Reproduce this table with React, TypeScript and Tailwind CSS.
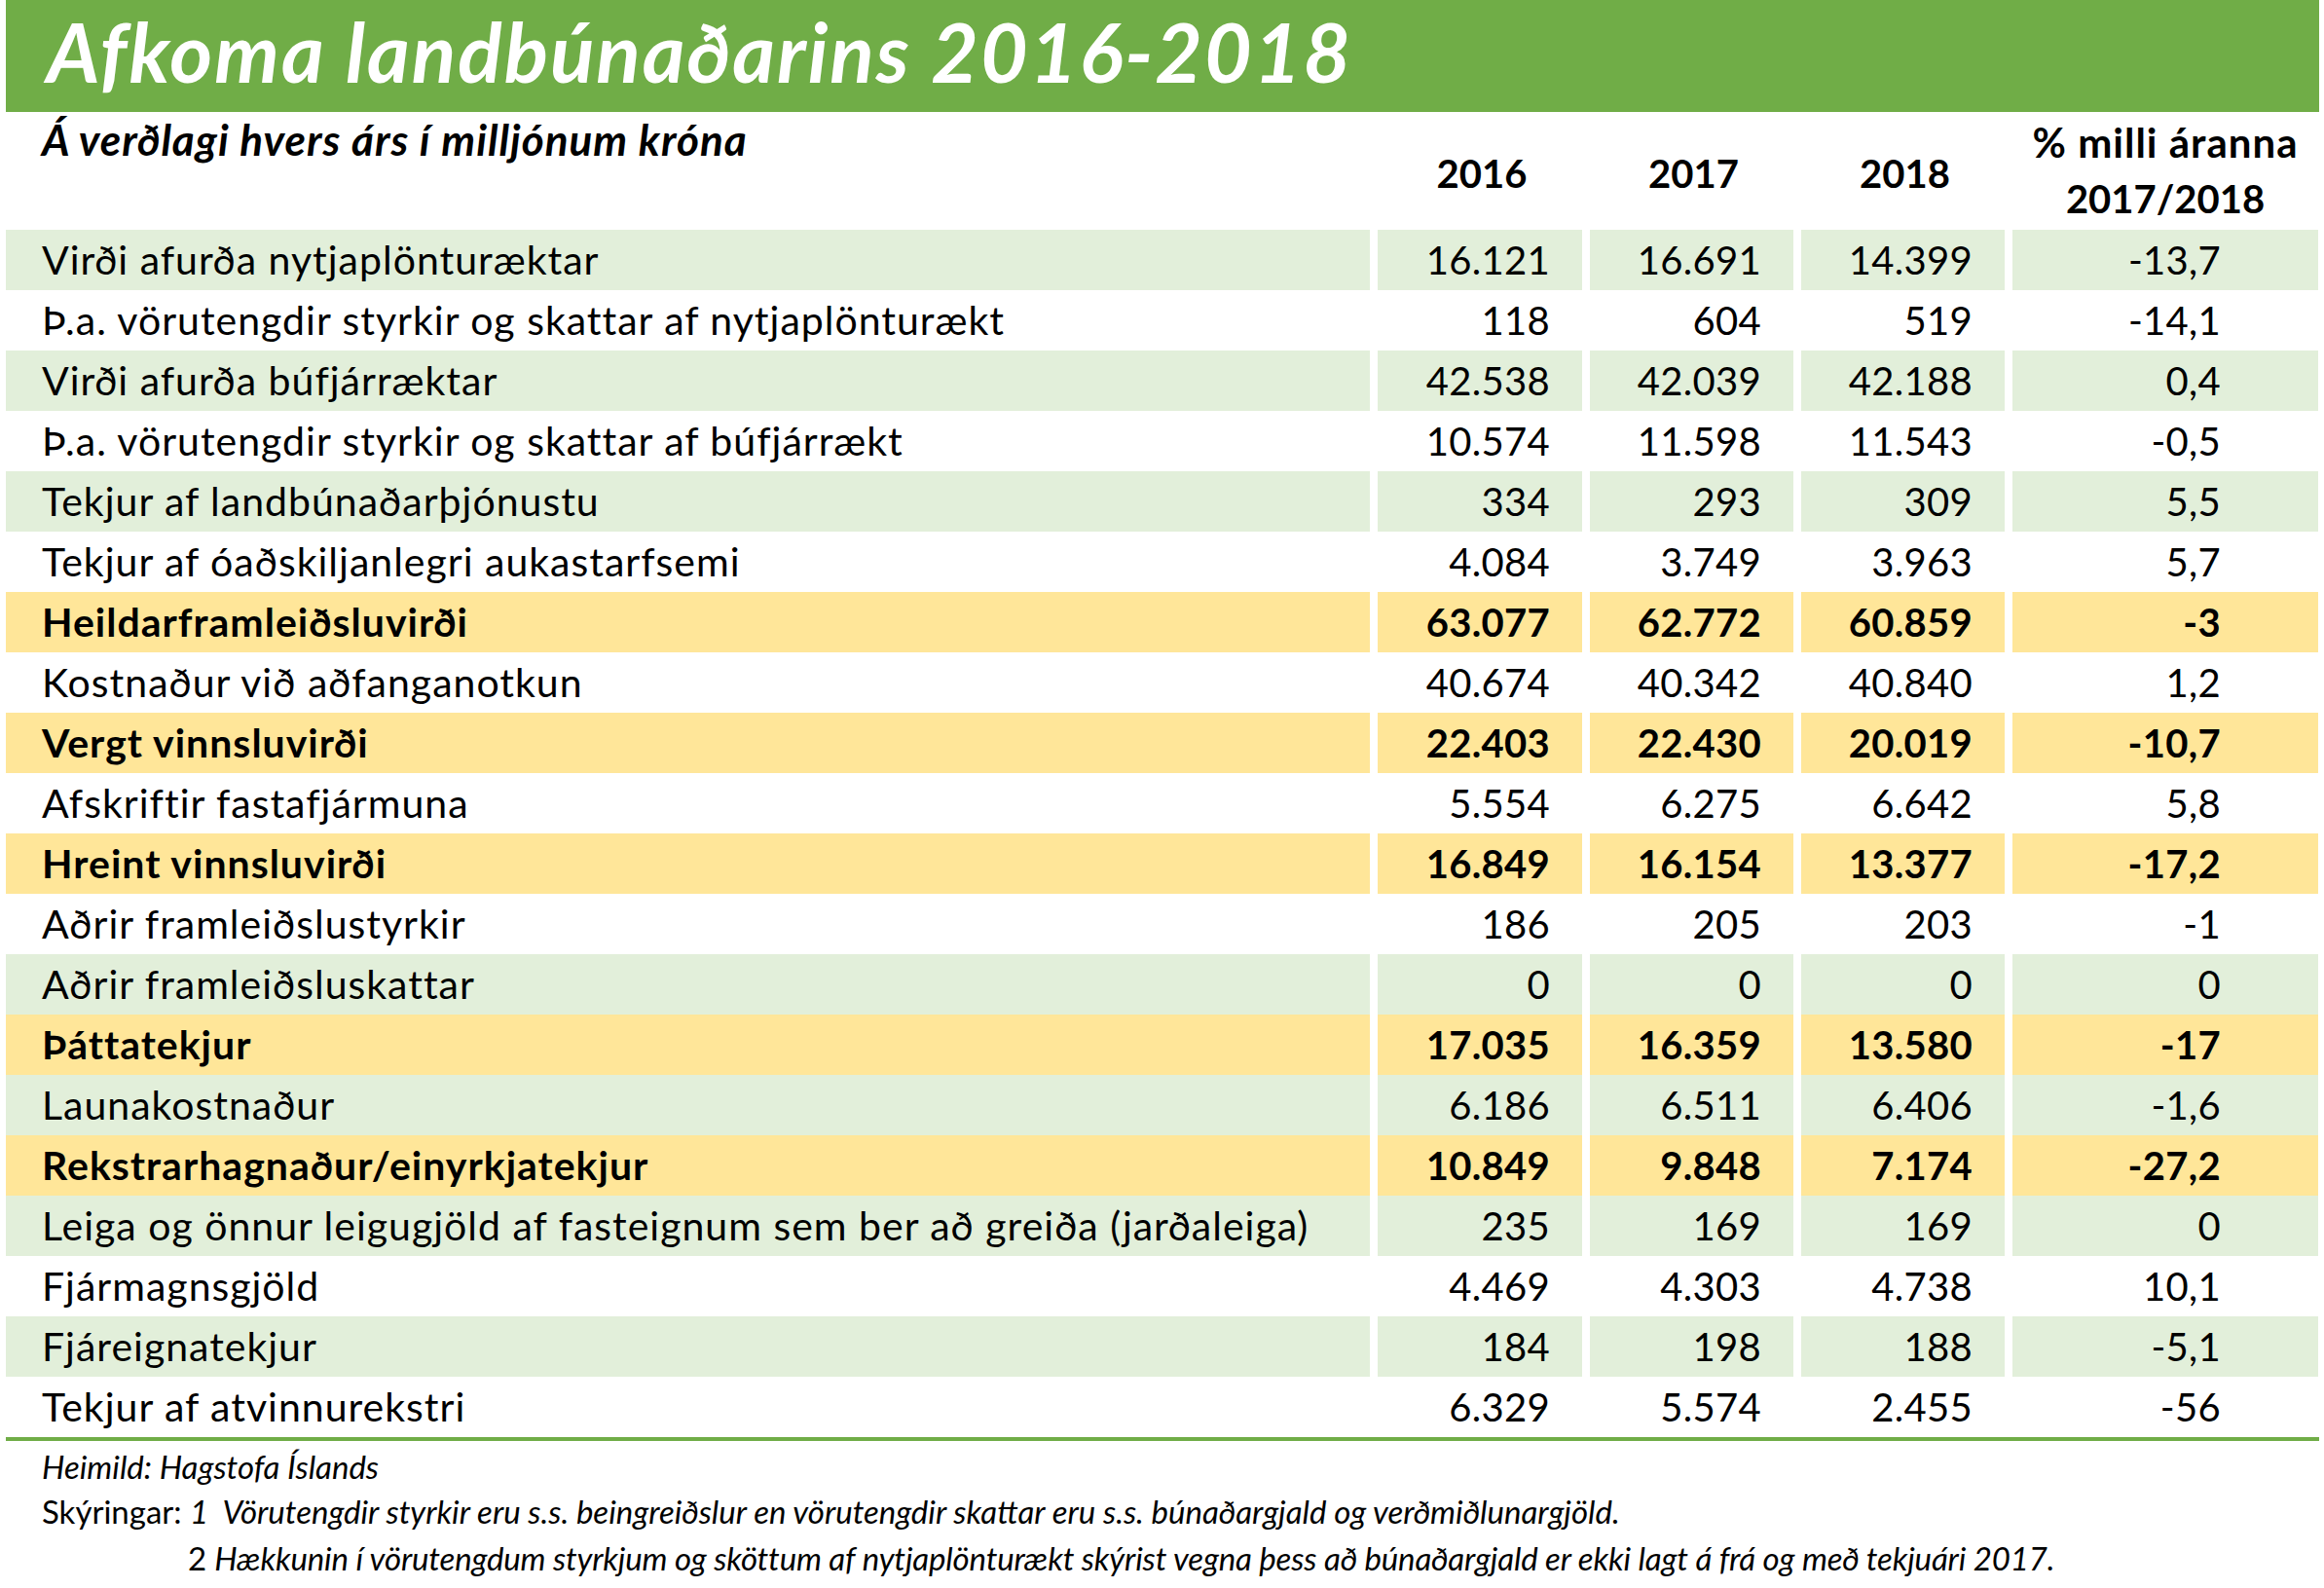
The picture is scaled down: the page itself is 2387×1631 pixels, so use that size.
import React from "react";

type Row = {
  label: string;
  v: [string, string, string, string];
  bg: "g" | "w" | "y";
};

const rows: Row[] = [
  { label: "Virði afurða nytjaplönturæktar", v: ["16.121", "16.691", "14.399", "-13,7"], bg: "g" },
  { label: "Þ.a. vörutengdir styrkir og skattar af nytjaplönturækt", v: ["118", "604", "519", "-14,1"], bg: "w" },
  { label: "Virði afurða búfjárræktar", v: ["42.538", "42.039", "42.188", "0,4"], bg: "g" },
  { label: "Þ.a. vörutengdir styrkir og skattar af búfjárrækt", v: ["10.574", "11.598", "11.543", "-0,5"], bg: "w" },
  { label: "Tekjur af landbúnaðarþjónustu", v: ["334", "293", "309", "5,5"], bg: "g" },
  { label: "Tekjur af óaðskiljanlegri aukastarfsemi", v: ["4.084", "3.749", "3.963", "5,7"], bg: "w" },
  { label: "Heildarframleiðsluvirði", v: ["63.077", "62.772", "60.859", "-3"], bg: "y" },
  { label: "Kostnaður við aðfanganotkun", v: ["40.674", "40.342", "40.840", "1,2"], bg: "w" },
  { label: "Vergt vinnsluvirði", v: ["22.403", "22.430", "20.019", "-10,7"], bg: "y" },
  { label: "Afskriftir fastafjármuna", v: ["5.554", "6.275", "6.642", "5,8"], bg: "w" },
  { label: "Hreint vinnsluvirði", v: ["16.849", "16.154", "13.377", "-17,2"], bg: "y" },
  { label: "Aðrir framleiðslustyrkir", v: ["186", "205", "203", "-1"], bg: "w" },
  { label: "Aðrir framleiðsluskattar", v: ["0", "0", "0", "0"], bg: "g" },
  { label: "Þáttatekjur", v: ["17.035", "16.359", "13.580", "-17"], bg: "y" },
  { label: "Launakostnaður", v: ["6.186", "6.511", "6.406", "-1,6"], bg: "g" },
  { label: "Rekstrarhagnaður/einyrkjatekjur", v: ["10.849", "9.848", "7.174", "-27,2"], bg: "y" },
  { label: "Leiga og önnur leigugjöld af fasteignum sem ber að greiða (jarðaleiga)", v: ["235", "169", "169", "0"], bg: "g" },
  { label: "Fjármagnsgjöld", v: ["4.469", "4.303", "4.738", "10,1"], bg: "w" },
  { label: "Fjáreignatekjur", v: ["184", "198", "188", "-5,1"], bg: "g" },
  { label: "Tekjur af atvinnurekstri", v: ["6.329", "5.574", "2.455", "-56"], bg: "w" },
];

function bgClass(bg: Row["bg"]) {
  if (bg === "g") return "bg-[#e2efda]";
  if (bg === "y") return "bg-[#ffe699]";
  return "bg-white";
}

export default function App() {
  return (
    <div className="w-[2387px] h-[1631px] bg-white text-black font-[Lato,sans-serif] overflow-hidden">
      {/* Title bar */}
      <div className="ml-[6px] w-[2376px] h-[115px] bg-[#70ad47] pl-[42px] pt-[11px]">
        <div className="text-[84px] leading-[84px] font-bold italic tracking-[2px] text-white whitespace-nowrap">
          Afkoma landbúnaðarins 2016-2018
        </div>
      </div>

      {/* Header */}
      <div className="ml-[6px] grid grid-cols-[1401px_210px_209px_209px_314px] gap-x-[8px] h-[121px]">
        <div className="pl-[37px] pt-[6px] text-[44px] leading-[44px] font-bold italic tracking-[1px] whitespace-nowrap">
          Á verðlagi hvers árs í milljónum króna
        </div>
        <div className="flex items-center justify-center pt-[4px] pl-[4px] text-[40px] leading-[40px] font-bold">2016</div>
        <div className="flex items-center justify-center pt-[4px] pl-[4px] text-[40px] leading-[40px] font-bold">2017</div>
        <div className="flex items-center justify-center pt-[4px] pl-[4px] text-[40px] leading-[40px] font-bold">2018</div>
        <div className="pt-[2px] text-center leading-[58px] font-bold whitespace-nowrap">
          <div className="text-[42px] tracking-[1px]">% milli áranna</div>
          <div className="text-[40px]">2017/2018</div>
        </div>
      </div>

      {/* Rows */}
      <div className="ml-[6px] flex flex-col">
        {rows.map((r, i) => {
          const bg = bgClass(r.bg);
          const weight = r.bg === "y" ? "font-bold" : "font-normal";
          return (
            <div
              key={i}
              className={`grid grid-cols-[1401px_210px_209px_209px_314px] gap-x-[8px] h-[62px] text-[40px] leading-[62px] ${weight}`}
            >
              <div className={`${bg} pl-[37px] whitespace-nowrap text-[41px] tracking-[1px]`}>{r.label}</div>
              <div className={`${bg} pr-[33px] text-right tracking-[0.3px]`}>{r.v[0]}</div>
              <div className={`${bg} pr-[33px] text-right tracking-[0.3px]`}>{r.v[1]}</div>
              <div className={`${bg} pr-[33px] text-right tracking-[0.3px]`}>{r.v[2]}</div>
              <div className={`${bg} pr-[100px] text-right tracking-[0.3px]`}>{r.v[3]}</div>
            </div>
          );
        })}
      </div>

      {/* Bottom rule */}
      <div className="ml-[6px] w-[2376px] h-[4px] bg-[#70ad47]" />

      {/* Footnotes */}
      <div className="pl-[43px] pt-[3px] text-[33px] text-black whitespace-nowrap">
        <div className="leading-[46px] italic">Heimild: Hagstofa Íslands</div>
        <div className="leading-[46px]">
          Skýringar: <span className="italic">1&nbsp; Vörutengdir styrkir eru s.s. beingreiðslur en vörutengdir skattar eru s.s. búnaðargjald og verðmiðlunargjöld.</span>
        </div>
        <div className="leading-[50px] pl-[150px] tracking-[-0.15px]">
          2 <span className="italic">Hækkunin í vörutengdum styrkjum og sköttum af nytjaplönturækt skýrist vegna þess að búnaðargjald er ekki lagt á frá og með tekjuári 2017.</span>
        </div>
      </div>
    </div>
  );
}
